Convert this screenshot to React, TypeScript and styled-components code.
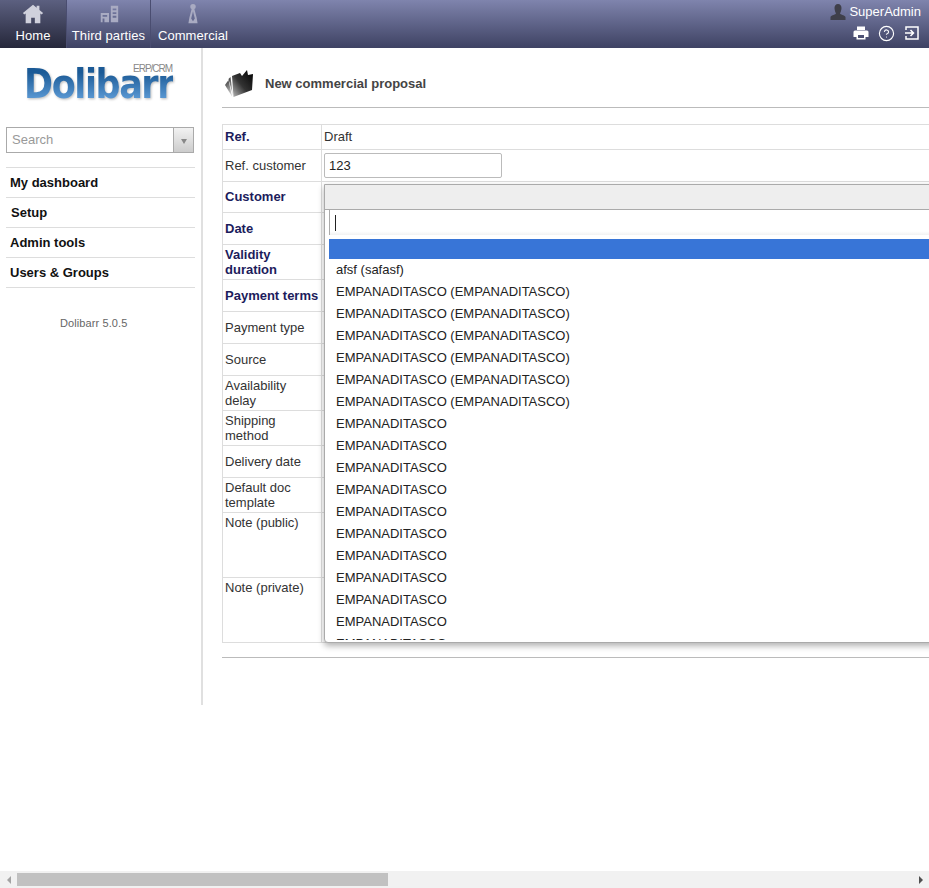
import React from 'react';
import styled, { createGlobalStyle } from 'styled-components';
import { CircleHelp } from 'lucide-react';

const GlobalStyle = createGlobalStyle`
    html, body {
        margin: 0;
        padding: 0;
        overflow: hidden;
        background: #fff;
    }
    body {
        font-family: "Liberation Sans", Arial, sans-serif;
        font-size: 13px;
        color: #333;
    }
`;

const Page = styled.div`
    width: 929px;
    height: 888px;
    display: flex;
    flex-direction: column;
    overflow: hidden;
`;

/* top bar */
const TopBar = styled.header`
    height: 48px;
    flex: none;
    display: flex;
    justify-content: space-between;
    background: linear-gradient(#7f84ad, #3e4263);
`;

const Tabs = styled.nav`
    display: flex;
`;

const Tab = styled.a<{ $active?: boolean; $width: number; $last?: boolean }>`
    width: ${(p) => p.$width}px;
    height: 48px;
    box-sizing: border-box;
    display: flex;
    flex-direction: column;
    align-items: center;
    padding-top: 3px;
    color: #fff;
    font-size: 13px;
    line-height: 16px;
    letter-spacing: 0.08px;
    white-space: nowrap;
    border-right: ${(p) => (p.$last ? '0' : '1px solid #4a4d70')};
    background: ${(p) => (p.$active ? 'linear-gradient(#5c6080, #25273a)' : 'none')};
`;

const TabIcon = styled.svg<{ $dim?: boolean }>`
    width: 22px;
    height: 22px;
    margin-bottom: 3px;
    fill: ${(p) => (p.$dim ? '#a9abc2' : '#cfd0dc')};
    filter: blur(0.4px);
`;

const UserArea = styled.div`
    display: flex;
    flex-direction: column;
    align-items: flex-end;
    padding: 4px 8px 0 0;
`;

const UserRow = styled.div`
    display: flex;
    align-items: center;
    gap: 3px;
    height: 16px;
    color: #fff;
    font-size: 13px;
    line-height: 16px;
`;

const UserIcon = styled.svg`
    width: 16px;
    height: 16px;
    fill: #3f3f4a;
    filter: blur(0.4px);
`;

const ToolIcons = styled.div`
    display: flex;
    align-items: center;
    gap: 9px;
    margin-top: 5px;
    margin-right: 1px;
    color: #fff;
    height: 16px;
`;

/* body */
const Body = styled.div`
    flex: 1;
    display: flex;
    align-items: flex-start;
    min-height: 0;
`;

const Sidebar = styled.aside`
    width: 201px;
    height: 657px;
    flex: none;
    box-sizing: border-box;
    padding: 0 6px;
`;

const Divider = styled.div`
    width: 2px;
    height: 657px;
    flex: none;
    background: #e0e0e0;
`;

const LogoBox = styled.div`
    position: relative;
    height: 79px;
`;

const LogoWord = styled.div`
    position: absolute;
    left: 18px;
    top: 16px;
    font-family: "DejaVu Sans", sans-serif;
    font-weight: 700;
    font-size: 35px;
    line-height: 40px;
    letter-spacing: -1.4px;
    transform: scaleY(1.15);
    background: linear-gradient(#1b5a96 25%, #5d9bd6 85%);
    -webkit-background-clip: text;
    background-clip: text;
    color: transparent;
    filter: drop-shadow(1px 1px 1px rgba(0, 0, 0, 0.25));
`;

const LogoTag = styled.div`
    position: absolute;
    left: 127px;
    top: 15px;
    font-size: 10px;
    line-height: 11px;
    letter-spacing: -1px;
    color: #888;
`;

const SearchBox = styled.div`
    height: 26px;
    width: 188px;
    box-sizing: border-box;
    border: 1px solid #aaa;
    display: flex;
    margin-bottom: 14px;
`;

const SearchText = styled.div`
    flex: 1;
    padding-left: 5px;
    line-height: 23px;
    font-size: 13px;
    color: #999;
`;

const SearchArrow = styled.div`
    width: 19px;
    border-left: 1px solid #aaa;
    background: linear-gradient(#f2f2f2, #ccc);
    display: flex;
    align-items: center;
    justify-content: center;
    &::after {
        content: '';
        margin-top: 3px;
        border-top: 5px solid #888;
        border-left: 3px solid transparent;
        border-right: 3px solid transparent;
    }
`;

const Menu = styled.div`
    width: 189px;
    border-top: 1px solid #ddd;
`;

const MenuItem = styled.a<{ $indent?: number }>`
    display: block;
    height: 29px;
    line-height: 29px;
    border-bottom: 1px solid #ddd;
    padding-left: ${(p) => p.$indent ?? 4}px;
    color: #111;
    font-weight: 700;
    font-size: 13px;
`;

const Version = styled.div`
    margin-top: 28px;
    padding-left: 54px;
    font-size: 11px;
    line-height: 14px;
    letter-spacing: 0.1px;
    color: #666;
`;

/* main */
const Main = styled.main`
    flex: 1;
    min-width: 0;
    height: 657px;
    overflow: hidden;
    padding-left: 19px;
`;

const TitleRow = styled.div`
    height: 60px;
    width: 2000px;
    box-sizing: border-box;
    display: flex;
    align-items: center;
    gap: 11px;
    padding: 12px 0 0 2px;
    border-bottom: 1px solid #bbb;
`;

const Title = styled.div`
    font-weight: 700;
    font-size: 13px;
    color: #444;
`;

const FormArea = styled.div`
    position: relative;
    width: 2000px;
    margin-top: 16px;
    padding-bottom: 14px;
    border-bottom: 1px solid #bbb;
`;

const FormTable = styled.table`
    width: 100%;
    border-collapse: collapse;
    table-layout: fixed;
    border-top: 1px solid #ddd;
`;

const Row = styled.tr<{ $height: number }>`
    height: ${(p) => p.$height}px;
    border-bottom: 1px solid #ddd;
`;

const LabelCell = styled.td<{ $required?: boolean; $top?: boolean; $lift?: boolean }>`
    width: 99px;
    box-sizing: border-box;
    padding: ${(p) => (p.$top ? '2px' : '0')} 2px ${(p) => (p.$lift ? '2px' : '0')} 2px;
    border-left: 1px solid #ddd;
    border-right: 1px solid #ddd;
    vertical-align: ${(p) => (p.$top ? 'top' : 'middle')};
    font-size: 13px;
    line-height: 15px;
    font-weight: ${(p) => (p.$required ? 700 : 400)};
    color: ${(p) => (p.$required ? '#1c1c5c' : '#333')};
`;

const ValueCell = styled.td<{ $lift?: boolean }>`
    padding: 0 2px ${(p) => (p.$lift ? '2px' : '0')};
    font-size: 13px;
    color: #333;
`;

const RefInput = styled.div`
    width: 178px;
    height: 25px;
    box-sizing: border-box;
    border: 1px solid #bbb;
    border-radius: 2px;
    padding-left: 4px;
    line-height: 24px;
    font-size: 13px;
    color: #222;
`;

const Dropdown = styled.div`
    position: absolute;
    left: 102px;
    top: 60px;
    width: 1500px;
    height: 459px;
    box-sizing: border-box;
    background: #fff;
    border: 1px solid #aaa;
    border-radius: 0 0 4px 4px;
    box-shadow: 0 3px 6px rgba(0, 0, 0, 0.3);
    display: flex;
    flex-direction: column;
`;

const DropdownHead = styled.div`
    height: 24px;
    flex: none;
    background: #eee;
    border-bottom: 1px solid #aaa;
`;

const SearchWrap = styled.div`
    flex: none;
    padding: 0 0 0 4px;
    height: 29px;
`;

const DropdownSearch = styled.div`
    height: 25px;
    box-sizing: border-box;
    border-left: 1px solid #aaa;
    padding: 5px 0 0 5px;
    background: linear-gradient(#fff 85%, #f2f2f2);
    &::before {
        content: '';
        display: block;
        width: 1px;
        height: 16px;
        background: #222;
    }
`;

const OptionList = styled.div`
    flex: 1;
    min-height: 0;
    overflow: hidden;
    margin: 0 0 2px 4px;
`;

const Option = styled.div<{ $highlighted?: boolean }>`
    height: ${(p) => (p.$highlighted ? 20 : 22)}px;
    line-height: 22px;
    padding-left: 7px;
    font-size: 13px;
    color: #222;
    white-space: nowrap;
    background: ${(p) => (p.$highlighted ? '#3875d7' : 'transparent')};
`;

/* fake browser scrollbar */
const ScrollBar = styled.div`
    height: 17px;
    flex: none;
    background: #f1f1f1;
    display: flex;
    align-items: center;
    justify-content: space-between;
    margin-top: auto;
`;

const ScrollArrow = styled.div<{ $right?: boolean }>`
    width: 17px;
    flex: none;
    display: flex;
    justify-content: center;
    &::after {
        content: '';
        border-top: 4px solid transparent;
        border-bottom: 4px solid transparent;
        ${(p) => (p.$right ? 'border-left: 4px solid #505050;' : 'border-right: 4px solid #a3a3a3;')}
    }
`;

const ScrollTrack = styled.div`
    flex: 1;
    height: 13px;
`;

const ScrollThumb = styled.div`
    width: 371px;
    height: 13px;
    background: #c1c1c1;
`;

const rows: { label: string; height: number; required?: boolean; top?: boolean; lift?: boolean }[] = [
    { label: 'Customer', height: 31, required: true, lift: true },
    { label: 'Date', height: 32, required: true },
    { label: 'Validity duration', height: 35, required: true },
    { label: 'Payment terms', height: 32, required: true },
    { label: 'Payment type', height: 32 },
    { label: 'Source', height: 32 },
    { label: 'Availability delay', height: 35 },
    { label: 'Shipping method', height: 35 },
    { label: 'Delivery date', height: 32 },
    { label: 'Default doc template', height: 35 },
    { label: 'Note (public)', height: 65, top: true },
    { label: 'Note (private)', height: 65, top: true },
];

const options: string[] = [
    'afsf (safasf)',
    ...Array(6).fill('EMPANADITASCO (EMPANADITASCO)'),
    ...Array(11).fill('EMPANADITASCO'),
];

function App(): React.ReactElement {
    return (
        <Page>
            <GlobalStyle />
            <TopBar>
                <Tabs>
                    <Tab $active $width={67}>
                        <TabIcon viewBox="0 0 24 24">
                            <path d="M12 2 1 11l1.500 1.500L4 11.400V22h6v-6h4v6h6V11.400l1.500 1.100L23 11l-4-3.300V3h-3v2.200z" />
                        </TabIcon>
                        Home
                    </Tab>
                    <Tab $width={84}>
                        <TabIcon $dim viewBox="0 0 24 24">
                            <path d="M14 3h8v18h-8zM16 6v2h4V6zm0 4v2h4v-2zm0 4v2h4v-2zM3 11h9v10H3zm2 2v2h5v-2zm0 4v4h2v-4z" fillRule="evenodd" />
                        </TabIcon>
                        Third parties
                    </Tab>
                    <Tab $width={84} $last>
                        <TabIcon $dim viewBox="0 0 24 24">
                            <path d="M12 1a3 3 0 0 1 3 3 3 3 0 0 1-1.500 2.600l2.500 9.400 1 6H7l1-6 2.500-9.400A3 3 0 0 1 9 4a3 3 0 0 1 3-3zm0 8-2 8 2 3 2-3z" fillRule="evenodd" />
                        </TabIcon>
                        Commercial
                    </Tab>
                </Tabs>
                <UserArea>
                    <UserRow>
                        <UserIcon viewBox="0 0 16 16">
                            <path d="M8 0c2.300 0 3.500 1.700 3.500 4S10.300 9 10 9.500c0 1 4.500 1.500 5.500 3.500v3H.5v-3c1-2 5.500-2.500 5.500-3.500C5.700 9 4.500 6.300 4.500 4S5.700 0 8 0z" />
                        </UserIcon>
                        SuperAdmin
                    </UserRow>
                    <ToolIcons>
                        <svg width="16" height="16" viewBox="0 0 16 16" fill="#fff">
                            <path
                                fillRule="evenodd"
                                d="M4 1.500h8V5H4zM2 5.500h12a1.500 1.500 0 0 1 1.500 1.500v5H12.500v2.500h-9V12H.5V7A1.500 1.500 0 0 1 2 5.500zM5 10v3h6v-3z"
                            />
                        </svg>
                        <CircleHelp size={17} strokeWidth={1.6} />
                        <svg width="16" height="16" viewBox="0 0 16 16" fill="none" stroke="#fff" strokeWidth="1.500">
                            <path d="M2 5V2h12v12H2v-3M1 8h8M6.500 5 9.500 8l-3 3" />
                        </svg>
                    </ToolIcons>
                </UserArea>
            </TopBar>
            <Body>
                <Sidebar>
                    <LogoBox>
                        <LogoWord>Dolibarr</LogoWord>
                        <LogoTag>ERP/CRM</LogoTag>
                    </LogoBox>
                    <SearchBox>
                        <SearchText>Search</SearchText>
                        <SearchArrow />
                    </SearchBox>
                    <Menu>
                        <MenuItem>My dashboard</MenuItem>
                        <MenuItem $indent={5}>Setup</MenuItem>
                        <MenuItem>Admin tools</MenuItem>
                        <MenuItem>Users &amp; Groups</MenuItem>
                    </Menu>
                    <Version>Dolibarr 5.0.5</Version>
                </Sidebar>
                <Divider />
                <Main>
                    <TitleRow>
                        <svg width="30" height="30" viewBox="0 0 30 30">
                            <defs>
                                <linearGradient id="folderFill" x1="1" y1="0" x2="0" y2="1">
                                    <stop offset="0" stopColor="#000" />
                                    <stop offset="0.55" stopColor="#333" />
                                    <stop offset="1" stopColor="#bbb" />
                                </linearGradient>
                                <linearGradient id="sheetFill" x1="0" y1="0" x2="0.3" y2="1">
                                    <stop offset="0" stopColor="#333" />
                                    <stop offset="1" stopColor="#ccc" />
                                </linearGradient>
                            </defs>
                            <path d="M1 16 4.500 11 8 27.500z" fill="url(#sheetFill)" />
                            <path d="M4.500 10 6.500 8 9 27z" fill="url(#sheetFill)" />
                            <path d="M8 7 16 4 18 7 23 1 24 6 29 5 28 21 9.500 28z" fill="url(#folderFill)" />
                        </svg>
                        <Title>New commercial proposal</Title>
                    </TitleRow>
                    <FormArea>
                        <FormTable>
                            <tbody>
                                <Row $height={25}>
                                    <LabelCell $required $lift>Ref.</LabelCell>
                                    <ValueCell $lift>Draft</ValueCell>
                                </Row>
                                <Row $height={32}>
                                    <LabelCell>Ref. customer</LabelCell>
                                    <ValueCell>
                                        <RefInput>123</RefInput>
                                    </ValueCell>
                                </Row>
                                {rows.map((row) => (
                                    <Row key={row.label} $height={row.height}>
                                        <LabelCell $required={row.required} $top={row.top} $lift={row.lift}>
                                            {row.label}
                                        </LabelCell>
                                        <ValueCell />
                                    </Row>
                                ))}
                            </tbody>
                        </FormTable>
                        <Dropdown>
                            <DropdownHead />
                            <SearchWrap>
                                <DropdownSearch />
                            </SearchWrap>
                            <OptionList>
                                <Option $highlighted />
                                {options.map((option, i) => (
                                    <Option key={i}>{option}</Option>
                                ))}
                            </OptionList>
                        </Dropdown>
                    </FormArea>
                </Main>
            </Body>
            <ScrollBar>
                <ScrollArrow />
                <ScrollTrack>
                    <ScrollThumb />
                </ScrollTrack>
                <ScrollArrow $right />
            </ScrollBar>
        </Page>
    );
}

export default App;
